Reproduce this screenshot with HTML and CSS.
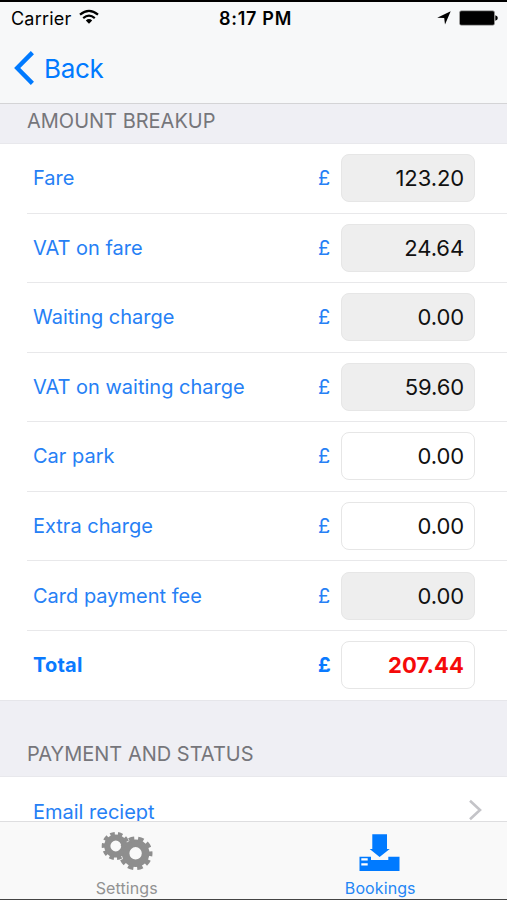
FILE: index.html
```html
<!DOCTYPE html>
<html lang="en">
<head>
  <meta charset="UTF-8">
  <title>Booking</title>
  <link rel="stylesheet" href="styles.css">
</head>
<body>
  <div class="phone">
    <header class="header">
      <div class="status-bar">
        <div class="carrier">
          <span>Carrier</span>
          <svg class="wifi" width="20" height="16" viewBox="0 0 20 16">
            <path d="M1 5.6Q10-2 19 5.6M4.2 9.2Q10 4.2 15.8 9.2" fill="none" stroke="#000" stroke-width="2.2"/>
            <path d="M6.8 11.5Q10 8.7 13.2 11.5L10 14.8Z"/>
          </svg>
        </div>
        <span class="time">8:17 PM</span>
        <div class="indicators">
          <svg width="14" height="14" viewBox="0 0 14 14"><path d="M13.7.3 8 13.5 7.2 7 .2 6.8Z"/></svg>
          <svg class="battery" width="39" height="16" viewBox="0 0 39 16">
            <rect x=".3" y=".5" width="35.5" height="15" rx="2" fill="#777"/>
            <rect x="1" y="1.2" width="34" height="13.6" rx="1.5"/>
            <path d="M36.3 5.2Q38.8 5.8 38.8 8T36.3 10.8Z"/>
          </svg>
        </div>
      </div>
      <div class="nav-bar">
        <svg width="20" height="34" viewBox="0 0 20 34"><path d="M18.4 1.6 3.2 17 18.4 32.4" fill="none" stroke="#007aff" stroke-width="4.4"/></svg>
        <span class="back">Back</span>
      </div>
    </header>

    <main class="content">
      <h2 class="section-title">AMOUNT BREAKUP</h2>
      <div class="list">
        <div class="row"><span class="label">Fare</span><span class="currency">£</span><span class="amount readonly">123.20</span></div>
        <div class="row"><span class="label">VAT on fare</span><span class="currency">£</span><span class="amount readonly">24.64</span></div>
        <div class="row"><span class="label">Waiting charge</span><span class="currency">£</span><span class="amount readonly">0.00</span></div>
        <div class="row"><span class="label">VAT on waiting charge</span><span class="currency">£</span><span class="amount readonly">59.60</span></div>
        <div class="row"><span class="label">Car park</span><span class="currency">£</span><span class="amount">0.00</span></div>
        <div class="row"><span class="label">Extra charge</span><span class="currency">£</span><span class="amount">0.00</span></div>
        <div class="row"><span class="label">Card payment fee</span><span class="currency">£</span><span class="amount readonly">0.00</span></div>
        <div class="row total"><span class="label">Total</span><span class="currency">£</span><span class="amount">207.44</span></div>
      </div>
      <h2 class="section-title status-title">PAYMENT AND STATUS</h2>
      <div class="row link-row">
        <span class="label">Email reciept</span>
        <svg class="chevron" width="14" height="22" viewBox="0 0 14 22"><path d="M2 1.8 12 11 2 20.2" fill="none" stroke="#c4c4c8" stroke-width="2.6"/></svg>
      </div>
    </main>

    <nav class="tab-bar">
      <div class="tab">
        <svg width="54" height="42" viewBox="0 0 54 42">
          <g fill="none" stroke="#8e8e8e">
            <circle cx="15.8" cy="16" r="8.5" stroke-width="6.2"/>
            <circle cx="15.8" cy="16" r="12" stroke-width="4.2" stroke-dasharray="4.4 3.14" stroke-dashoffset="2"/>
            <circle cx="35.6" cy="23.3" r="10" stroke-width="7.6"/>
            <circle cx="35.6" cy="23.3" r="14.5" stroke-width="4.8" stroke-dasharray="5.3 3.811" stroke-dashoffset="2.5"/>
          </g>
        </svg>
        <span>Settings</span>
      </div>
      <div class="tab active">
        <svg width="54" height="42" viewBox="0 0 54 42">
          <path d="M19.3 4.3H34V19H36.7L26.6 27 16.7 19H19.3Z" fill="#007aff"/>
          <path d="M6.5 26.8H18V30H35.3V26.8H46.5V41H6.5Z" fill="#007aff"/>
          <path d="M8.3 28.3H14.7V30.6H8.3ZM8.3 33.2H14.7V35.5H8.3Z" fill="#fff"/>
        </svg>
        <span>Bookings</span>
      </div>
    </nav>
  </div>
</body>
</html>
```
FILE: styles.css
```css
* {
  box-sizing: border-box;
}
body {
  margin: 0;
  overflow: hidden;
  font-family: Inter, "Liberation Sans", sans-serif;
  background-color: #efeff4;
}
svg {
  display: block;
  flex: none;
}
.phone {
  display: flex;
  flex-direction: column;
  height: 900px;
  border-top: 2px solid #000;
  border-bottom: 1px solid #444;
}
.header {
  flex: none;
  height: 102px;
  background-color: #f7f8f9;
  border-bottom: 1px solid #d4d4d6;
}
.status-bar {
  display: grid;
  grid-template-columns: 1fr auto 1fr;
  align-items: center;
  height: 32px;
  padding: 0 9px 0 11px;
  font-size: 18px;
}
.carrier {
  display: flex;
  align-items: center;
  gap: 8px;
  letter-spacing: 0.2px;
}
.wifi {
  margin-top: -2px;
}
.time {
  padding-left: 2px;
  font-weight: 600;
  letter-spacing: 0.7px;
}
.indicators {
  display: flex;
  align-items: center;
  justify-content: flex-end;
  gap: 8px;
}
.nav-bar {
  display: flex;
  align-items: center;
  gap: 10px;
  height: 68px;
  padding-left: 14px;
  color: #007aff;
  font-size: 26px;
  letter-spacing: -0.3px;
}
.content {
  flex: 1;
  min-height: 0;
  overflow: hidden;
}
.section-title {
  display: flex;
  align-items: flex-end;
  height: 40px;
  margin: 0;
  padding: 0 0 10px 27px;
  border-bottom: 1px solid #e8e8ec;
  color: #76767b;
  font-size: 20px;
  font-weight: 400;
  line-height: 24px;
}
.status-title {
  height: 77px;
  border-top: 1px solid #e6e6ea;
}
.list {
  background-color: #fff;
}
.row {
  display: flex;
  align-items: center;
  height: 69.55px;
  padding: 0 32px 0 6px;
  margin-left: 27px;
  border-bottom: 1px solid #e8e8ea;
  color: #2680f5;
  font-size: 20px;
}
.row:last-child {
  border-bottom: 0;
}
.label {
  flex: 1;
}
.currency {
  width: 23px;
}
.amount {
  display: flex;
  align-items: center;
  justify-content: flex-end;
  width: 134px;
  height: 48px;
  padding-right: 10px;
  border: 1px solid #e6e6e6;
  border-radius: 8px;
  background-color: #fff;
  color: #111;
  font-size: 22px;
  letter-spacing: -0.1px;
}
.readonly {
  background-color: #eee;
}
.total {
  padding-bottom: 1px;
  font-weight: 700;
  letter-spacing: 0.2px;
}
.total .label,
.total .currency {
  color: #0a7aff;
}
.total .amount {
  color: #f50a0a;
  letter-spacing: 0.1px;
}
.link-row {
  margin-left: 0;
  padding: 0 25px 0 33px;
  background-color: #fff;
}
.chevron {
  margin-bottom: 4px;
}
.tab-bar {
  display: flex;
  flex: none;
  height: 78px;
  border-top: 1px solid #dedee0;
  background-color: #f9f9f9;
}
.tab {
  display: flex;
  flex: 1;
  flex-direction: column;
  align-items: center;
  padding-top: 8px;
  color: #929292;
  font-size: 16px;
  line-height: 20px;
  letter-spacing: 0.1px;
}
.tab span {
  margin-top: 6px;
}
.active {
  color: #2486f5;
}
```
